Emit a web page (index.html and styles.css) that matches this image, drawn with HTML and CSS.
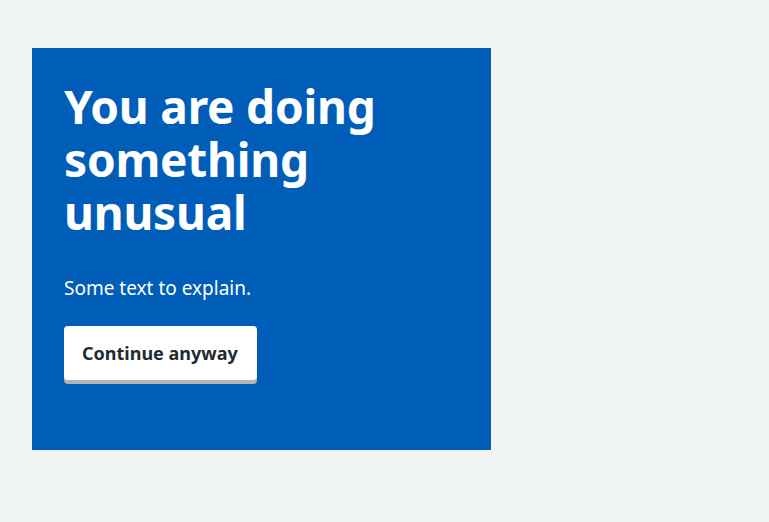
FILE: index.html
```html
<!DOCTYPE html>
<html lang="en">
<head>
<meta charset="utf-8">
<title>Panel</title>
<link rel="stylesheet" href="styles.css">
</head>
<body>
<main class="page">
  <div class="panel">
    <h1 class="panel-title">You are doing something unusual</h1>
    <p class="panel-body">Some text to explain.</p>
    <button class="button-reverse" type="button">Continue anyway</button>
  </div>
</main>
</body>
</html>
```
FILE: styles.css
```css
html, body {
  margin: 0;
  padding: 0;
  background: #f0f4f5;
}
body {
  font-family: "Noto Sans", "Open Sans", sans-serif;
  color: #212b32;
  -webkit-font-smoothing: antialiased;
}
.page {
  padding: 48px 32px;
}
.panel {
  box-sizing: border-box;
  width: 459px;
  min-height: 402px;
  background: #005eb8;
  color: #ffffff;
  padding: 32px 32px 64px;
}
.panel-title {
  margin: 0 0 35px;
  font-size: 46px;
  line-height: 53px;
  font-weight: 700;
  letter-spacing: -0.2px;
}
.panel-body {
  margin: 0 0 24px;
  font-size: 19px;
  line-height: 28px;
}
.button-reverse {
  display: block;
  font-family: inherit;
  font-size: 18px;
  font-weight: 700;
  line-height: 24px;
  color: #212b32;
  background: #ffffff;
  border: 0;
  border-radius: 4px;
  padding: 15px 19px 15px 18px;
  box-shadow: 0 4px 0 #b1b4b6;
  cursor: pointer;
}
```
